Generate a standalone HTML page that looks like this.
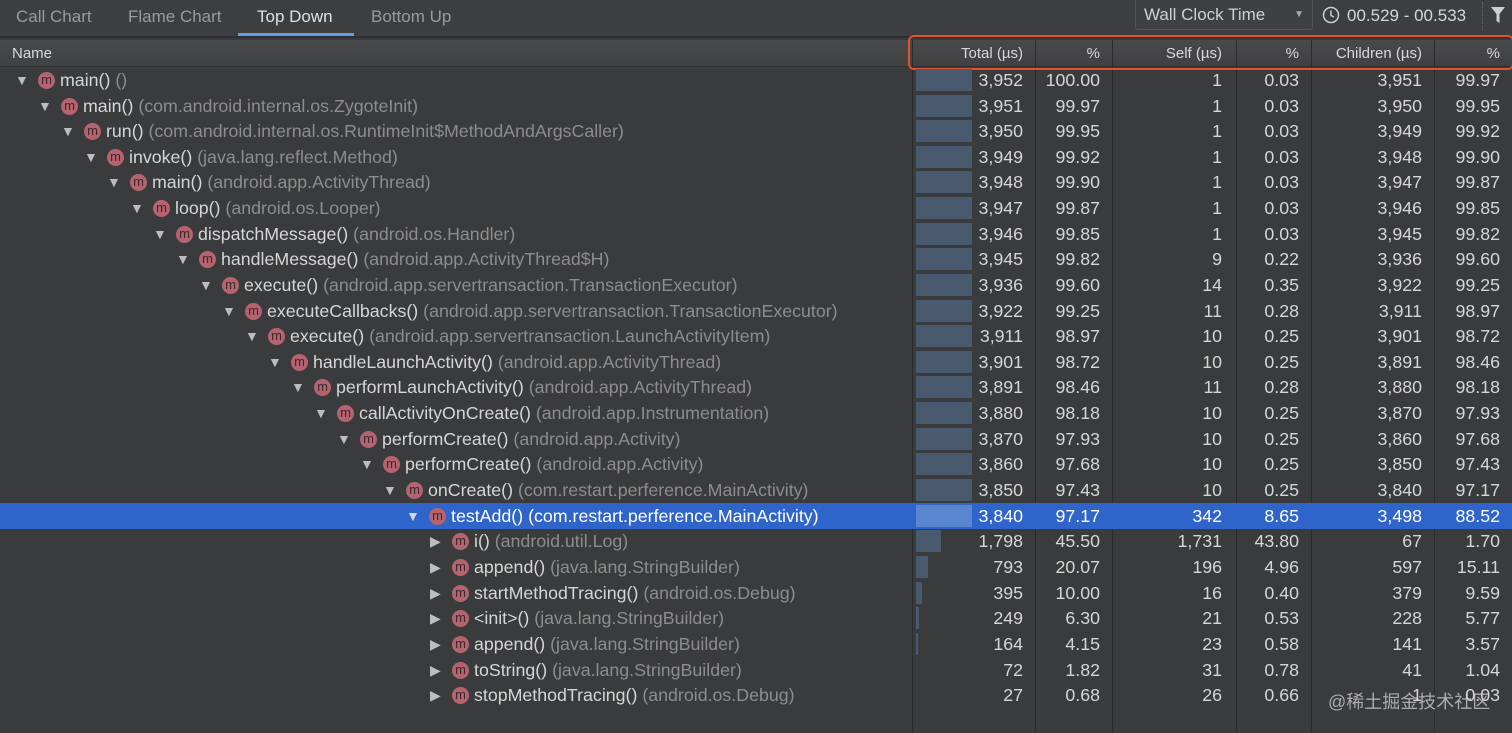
<!DOCTYPE html>
<html><head><meta charset="utf-8"><style>
*{margin:0;padding:0;box-sizing:border-box}
body{width:1512px;height:733px;overflow:hidden;background:#3a3b3c;font-family:"Liberation Sans",sans-serif;color:#d6d6d6;position:relative}
.top{position:absolute;left:0;top:0;width:1512px;height:38px;background:#3c3e40;border-bottom:2px solid #2e2f30}
.tab{position:absolute;top:7px;font-size:17px;color:#9a9a9a}
.hdr{position:absolute;left:0;top:40px;width:1512px;height:27px;background:linear-gradient(#47494b,#3f4143);border-bottom:1px solid #2d2e2f;font-size:15px;color:#d8d8d8}
.hdr span{position:absolute;top:5px}
.vl{position:absolute;top:40px;height:693px;width:1px;background:#2a2b2c}
.r{position:absolute;left:0;width:1512px;height:26px;font-size:17.8px}
.r span{position:absolute;top:3px;white-space:nowrap}
.t{font-size:14px;color:#bdbdbd;top:5px!important}
.ic{width:17px;height:17px;border-radius:50%;background:#b5636f;color:#3a2a2c;font-size:13px;text-align:center;line-height:15px;top:5px!important}
.c{color:#8d8d8d}
.bar{position:absolute;left:916px;top:2px;height:22px;background:#4a5a6e}
.v1{right:489px}.v2{right:412px}.v3{right:290px}.v4{right:213px}.v5{right:90px}.v6{right:12px}
.sel{background:#2f65ca;color:#fff}
.sel .c{color:#fff}
</style></head><body>
<div class="top">
<span class="tab" style="left:16px">Call Chart</span>
<span class="tab" style="left:128px">Flame Chart</span>
<span class="tab" style="left:257px;color:#e0e0e0">Top Down</span>
<span class="tab" style="left:371px">Bottom Up</span>
<div style="position:absolute;left:238px;top:33px;width:116px;height:3px;background:#6a9be0"></div>
<div style="position:absolute;left:1135px;top:0;width:178px;height:30px;border:1px solid #555;border-top:none;border-radius:0 0 3px 3px;background:#3e4042;font-size:17px;color:#d0d0d0;padding:5px 8px">Wall Clock Time<span style="position:absolute;right:8px;top:9px;font-size:10px;color:#aaa">▼</span></div>
<svg style="position:absolute;left:1322px;top:6px" width="18" height="18" viewBox="0 0 18 18"><circle cx="9" cy="9" r="7.5" fill="none" stroke="#ccc" stroke-width="1.5"/><path d="M9 4.5V9.5L12 11" fill="none" stroke="#ccc" stroke-width="1.5"/></svg>
<span style="position:absolute;left:1347px;top:6px;font-size:17px;color:#d6d6d6">00.529 - 00.533</span>
<div style="position:absolute;left:1482px;top:2px;height:28px;border-left:1px dotted #666"></div>
<svg style="position:absolute;left:1490px;top:6px" width="16" height="18" viewBox="0 0 16 18"><path d="M1 1H15L9.5 8V17L6.5 15V8Z" fill="#cfcfcf"/></svg>
</div>
<div class="hdr">
<span style="left:12px">Name</span>
<span style="right:489px">Total (µs)</span><span style="right:412px">%</span>
<span style="right:290px">Self (µs)</span><span style="right:213px">%</span>
<span style="right:90px">Children (µs)</span><span style="right:12px">%</span>
</div>
<div class="vl" style="left:912px"></div><div class="vl" style="left:1035px"></div><div class="vl" style="left:1112px"></div><div class="vl" style="left:1236px"></div><div class="vl" style="left:1311px"></div><div class="vl" style="left:1434px"></div>
<div style="position:absolute;left:908px;top:35px;width:606px;height:35px;border:2px solid #e0532f;border-radius:6px"></div>

<div class="r" style="top:67px"><span class="t" style="left:15px">▼</span><span class="ic" style="left:38px">m</span><span style="left:60px">main() <span class="c" style="position:static">()</span></span><div class="bar" style="width:56px"></div><span class="v1">3,952</span><span class="v2">100.00</span><span class="v3">1</span><span class="v4">0.03</span><span class="v5">3,951</span><span class="v6">99.97</span></div>
<div class="r" style="top:93px"><span class="t" style="left:38px">▼</span><span class="ic" style="left:61px">m</span><span style="left:83px">main() <span class="c" style="position:static">(com.android.internal.os.ZygoteInit)</span></span><div class="bar" style="width:56px"></div><span class="v1">3,951</span><span class="v2">99.97</span><span class="v3">1</span><span class="v4">0.03</span><span class="v5">3,950</span><span class="v6">99.95</span></div>
<div class="r" style="top:118px"><span class="t" style="left:61px">▼</span><span class="ic" style="left:84px">m</span><span style="left:106px">run() <span class="c" style="position:static">(com.android.internal.os.RuntimeInit$MethodAndArgsCaller)</span></span><div class="bar" style="width:56px"></div><span class="v1">3,950</span><span class="v2">99.95</span><span class="v3">1</span><span class="v4">0.03</span><span class="v5">3,949</span><span class="v6">99.92</span></div>
<div class="r" style="top:144px"><span class="t" style="left:84px">▼</span><span class="ic" style="left:107px">m</span><span style="left:129px">invoke() <span class="c" style="position:static">(java.lang.reflect.Method)</span></span><div class="bar" style="width:56px"></div><span class="v1">3,949</span><span class="v2">99.92</span><span class="v3">1</span><span class="v4">0.03</span><span class="v5">3,948</span><span class="v6">99.90</span></div>
<div class="r" style="top:169px"><span class="t" style="left:107px">▼</span><span class="ic" style="left:130px">m</span><span style="left:152px">main() <span class="c" style="position:static">(android.app.ActivityThread)</span></span><div class="bar" style="width:56px"></div><span class="v1">3,948</span><span class="v2">99.90</span><span class="v3">1</span><span class="v4">0.03</span><span class="v5">3,947</span><span class="v6">99.87</span></div>
<div class="r" style="top:195px"><span class="t" style="left:130px">▼</span><span class="ic" style="left:153px">m</span><span style="left:175px">loop() <span class="c" style="position:static">(android.os.Looper)</span></span><div class="bar" style="width:56px"></div><span class="v1">3,947</span><span class="v2">99.87</span><span class="v3">1</span><span class="v4">0.03</span><span class="v5">3,946</span><span class="v6">99.85</span></div>
<div class="r" style="top:221px"><span class="t" style="left:153px">▼</span><span class="ic" style="left:176px">m</span><span style="left:198px">dispatchMessage() <span class="c" style="position:static">(android.os.Handler)</span></span><div class="bar" style="width:56px"></div><span class="v1">3,946</span><span class="v2">99.85</span><span class="v3">1</span><span class="v4">0.03</span><span class="v5">3,945</span><span class="v6">99.82</span></div>
<div class="r" style="top:246px"><span class="t" style="left:176px">▼</span><span class="ic" style="left:199px">m</span><span style="left:221px">handleMessage() <span class="c" style="position:static">(android.app.ActivityThread$H)</span></span><div class="bar" style="width:56px"></div><span class="v1">3,945</span><span class="v2">99.82</span><span class="v3">9</span><span class="v4">0.22</span><span class="v5">3,936</span><span class="v6">99.60</span></div>
<div class="r" style="top:272px"><span class="t" style="left:199px">▼</span><span class="ic" style="left:222px">m</span><span style="left:244px">execute() <span class="c" style="position:static">(android.app.servertransaction.TransactionExecutor)</span></span><div class="bar" style="width:56px"></div><span class="v1">3,936</span><span class="v2">99.60</span><span class="v3">14</span><span class="v4">0.35</span><span class="v5">3,922</span><span class="v6">99.25</span></div>
<div class="r" style="top:298px"><span class="t" style="left:222px">▼</span><span class="ic" style="left:245px">m</span><span style="left:267px">executeCallbacks() <span class="c" style="position:static">(android.app.servertransaction.TransactionExecutor)</span></span><div class="bar" style="width:56px"></div><span class="v1">3,922</span><span class="v2">99.25</span><span class="v3">11</span><span class="v4">0.28</span><span class="v5">3,911</span><span class="v6">98.97</span></div>
<div class="r" style="top:323px"><span class="t" style="left:245px">▼</span><span class="ic" style="left:268px">m</span><span style="left:290px">execute() <span class="c" style="position:static">(android.app.servertransaction.LaunchActivityItem)</span></span><div class="bar" style="width:56px"></div><span class="v1">3,911</span><span class="v2">98.97</span><span class="v3">10</span><span class="v4">0.25</span><span class="v5">3,901</span><span class="v6">98.72</span></div>
<div class="r" style="top:349px"><span class="t" style="left:268px">▼</span><span class="ic" style="left:291px">m</span><span style="left:313px">handleLaunchActivity() <span class="c" style="position:static">(android.app.ActivityThread)</span></span><div class="bar" style="width:56px"></div><span class="v1">3,901</span><span class="v2">98.72</span><span class="v3">10</span><span class="v4">0.25</span><span class="v5">3,891</span><span class="v6">98.46</span></div>
<div class="r" style="top:374px"><span class="t" style="left:291px">▼</span><span class="ic" style="left:314px">m</span><span style="left:336px">performLaunchActivity() <span class="c" style="position:static">(android.app.ActivityThread)</span></span><div class="bar" style="width:56px"></div><span class="v1">3,891</span><span class="v2">98.46</span><span class="v3">11</span><span class="v4">0.28</span><span class="v5">3,880</span><span class="v6">98.18</span></div>
<div class="r" style="top:400px"><span class="t" style="left:314px">▼</span><span class="ic" style="left:337px">m</span><span style="left:359px">callActivityOnCreate() <span class="c" style="position:static">(android.app.Instrumentation)</span></span><div class="bar" style="width:56px"></div><span class="v1">3,880</span><span class="v2">98.18</span><span class="v3">10</span><span class="v4">0.25</span><span class="v5">3,870</span><span class="v6">97.93</span></div>
<div class="r" style="top:426px"><span class="t" style="left:337px">▼</span><span class="ic" style="left:360px">m</span><span style="left:382px">performCreate() <span class="c" style="position:static">(android.app.Activity)</span></span><div class="bar" style="width:56px"></div><span class="v1">3,870</span><span class="v2">97.93</span><span class="v3">10</span><span class="v4">0.25</span><span class="v5">3,860</span><span class="v6">97.68</span></div>
<div class="r" style="top:451px"><span class="t" style="left:360px">▼</span><span class="ic" style="left:383px">m</span><span style="left:405px">performCreate() <span class="c" style="position:static">(android.app.Activity)</span></span><div class="bar" style="width:56px"></div><span class="v1">3,860</span><span class="v2">97.68</span><span class="v3">10</span><span class="v4">0.25</span><span class="v5">3,850</span><span class="v6">97.43</span></div>
<div class="r" style="top:477px"><span class="t" style="left:383px">▼</span><span class="ic" style="left:406px">m</span><span style="left:428px">onCreate() <span class="c" style="position:static">(com.restart.perference.MainActivity)</span></span><div class="bar" style="width:56px"></div><span class="v1">3,850</span><span class="v2">97.43</span><span class="v3">10</span><span class="v4">0.25</span><span class="v5">3,840</span><span class="v6">97.17</span></div>
<div class="r sel" style="top:503px"><span class="t" style="left:406px;color:#cfd8ee">▼</span><span class="ic" style="left:429px">m</span><span style="left:451px">testAdd() <span class="c" style="position:static">(com.restart.perference.MainActivity)</span></span><div class="bar" style="width:56px;background:#5a86d0"></div><span class="v1">3,840</span><span class="v2">97.17</span><span class="v3">342</span><span class="v4">8.65</span><span class="v5">3,498</span><span class="v6">88.52</span></div>
<div class="r" style="top:528px"><span class="t" style="left:430px">▶</span><span class="ic" style="left:452px">m</span><span style="left:474px">i() <span class="c" style="position:static">(android.util.Log)</span></span><div class="bar" style="width:25px"></div><span class="v1">1,798</span><span class="v2">45.50</span><span class="v3">1,731</span><span class="v4">43.80</span><span class="v5">67</span><span class="v6">1.70</span></div>
<div class="r" style="top:554px"><span class="t" style="left:430px">▶</span><span class="ic" style="left:452px">m</span><span style="left:474px">append() <span class="c" style="position:static">(java.lang.StringBuilder)</span></span><div class="bar" style="width:12px"></div><span class="v1">793</span><span class="v2">20.07</span><span class="v3">196</span><span class="v4">4.96</span><span class="v5">597</span><span class="v6">15.11</span></div>
<div class="r" style="top:580px"><span class="t" style="left:430px">▶</span><span class="ic" style="left:452px">m</span><span style="left:474px">startMethodTracing() <span class="c" style="position:static">(android.os.Debug)</span></span><div class="bar" style="width:6px"></div><span class="v1">395</span><span class="v2">10.00</span><span class="v3">16</span><span class="v4">0.40</span><span class="v5">379</span><span class="v6">9.59</span></div>
<div class="r" style="top:605px"><span class="t" style="left:430px">▶</span><span class="ic" style="left:452px">m</span><span style="left:474px">&lt;init&gt;() <span class="c" style="position:static">(java.lang.StringBuilder)</span></span><div class="bar" style="width:3px"></div><span class="v1">249</span><span class="v2">6.30</span><span class="v3">21</span><span class="v4">0.53</span><span class="v5">228</span><span class="v6">5.77</span></div>
<div class="r" style="top:631px"><span class="t" style="left:430px">▶</span><span class="ic" style="left:452px">m</span><span style="left:474px">append() <span class="c" style="position:static">(java.lang.StringBuilder)</span></span><div class="bar" style="width:2px"></div><span class="v1">164</span><span class="v2">4.15</span><span class="v3">23</span><span class="v4">0.58</span><span class="v5">141</span><span class="v6">3.57</span></div>
<div class="r" style="top:657px"><span class="t" style="left:430px">▶</span><span class="ic" style="left:452px">m</span><span style="left:474px">toString() <span class="c" style="position:static">(java.lang.StringBuilder)</span></span><span class="v1">72</span><span class="v2">1.82</span><span class="v3">31</span><span class="v4">0.78</span><span class="v5">41</span><span class="v6">1.04</span></div>
<div class="r" style="top:682px"><span class="t" style="left:430px">▶</span><span class="ic" style="left:452px">m</span><span style="left:474px">stopMethodTracing() <span class="c" style="position:static">(android.os.Debug)</span></span><span class="v1">27</span><span class="v2">0.68</span><span class="v3">26</span><span class="v4">0.66</span><span class="v5">1</span><span class="v6">0.03</span></div>
<div style="position:absolute;left:1328px;top:688px;font-size:18px;color:rgba(220,220,220,0.7);font-family:'Liberation Sans','Noto Sans CJK SC',sans-serif">@稀土掘金技术社区</div>
</body></html>
